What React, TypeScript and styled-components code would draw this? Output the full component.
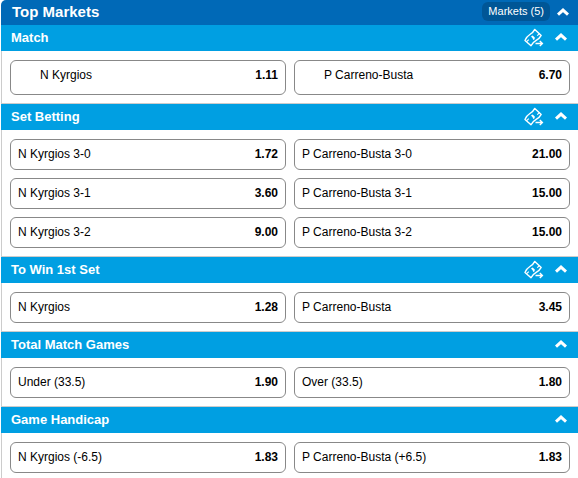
import React, { useState } from "react";
import styled, { createGlobalStyle } from "styled-components";

const GlobalStyle = createGlobalStyle`
  *, *::before, *::after { box-sizing: border-box; }
  body {
    margin: 0;
    background: #fff;
    color: #000;
    font-family: "Liberation Sans", Arial, sans-serif;
    font-size: 12px;
    line-height: 16px;
    overflow-x: hidden;
  }
  button { font: inherit; color: inherit; cursor: pointer; }
  h1, h2 { margin: 0; }
`;

const Panel = styled.main`
  margin-left: 1px;
`;

const PanelHeader = styled.header`
  display: flex;
  align-items: center;
  gap: 7px;
  height: 25px;
  padding: 0 9px 2px 11px;
  background: #0069b7;
  color: #fff;
  border-top-left-radius: 5px;
`;

const PanelTitle = styled.h1`
  flex: 1;
  font-size: 15px;
  line-height: 23px;
`;

const CountPill = styled.button`
  height: 19px;
  padding: 0 6px;
  border: 0;
  border-radius: 6px;
  background: #005696;
  font-size: 11px;
  line-height: 19px;
`;

const Market = styled.section`
  & + & { border-top: 1px solid #ccc; }
`;

const MarketHeader = styled.header`
  display: flex;
  align-items: center;
  gap: 11px;
  height: 26px;
  padding: 0 11px 0 10px;
  background: #009fe2;
  color: #fff;
`;

const MarketTitle = styled.h2`
  flex: 1;
  font-size: 13px;
  line-height: 26px;
`;

const IconButton = styled.button`
  display: flex;
  padding: 0;
  border: 0;
  background: none;
`;

const ToggleButton = styled(IconButton)`
  padding-bottom: 2px;
`;

const Selections = styled.div`
  display: grid;
  grid-template-columns: 1fr 1fr;
  gap: 8px;
  padding: 9px 8px 8px;
  border-left: 1px solid #ccc;
`;

const Selection = styled.button<{ $featured?: boolean }>`
  display: flex;
  align-items: center;
  justify-content: space-between;
  height: ${(p) => (p.$featured ? 35 : 31)}px;
  padding: ${(p) => (p.$featured ? "0 7px 6px 29px" : "0 7px 2px")};
  border: 1px solid #888;
  border-radius: 6px;
  background: #fff;
  text-align: left;
`;

const Odds = styled.strong`
  font-weight: bold;
`;

const Chevron = ({ open }: { open: boolean }) => (
  <svg width="12" height="8" viewBox="0 0 12 8" fill="none" stroke="#fff" strokeWidth="3">
    <path d={open ? "M1 6.7 6 2.1 11 6.7" : "M1 1.3 6 5.9 11 1.3"} />
  </svg>
);

const CashOutIcon = () => (
  <svg width="20" height="20" viewBox="0 0 20 20" fill="none" stroke="#fff" strokeWidth="1.4" strokeLinejoin="round">
    <path d="M1 12.4C3.2 5.6 7.8 7.6 10.8 1.4L17.2 7.4C14.2 13.4 9.8 11.4 7 17.8Z" />
    <path d="M2.6 13.6 4.8 11.6M13.2 7.6 15.6 5.6" strokeWidth="1.2" />
    <path d="M7 8.4 8.6 7.4 10.8 9.4 10.6 11.2 9.2 12 8.6 10.2Z" fill="#fff" stroke="none" />
    <path d="M11.5 15.5H18.2M15.8 13 18.4 15.5 15.8 18" strokeLinejoin="miter" />
  </svg>
);

type Pick = [name: string, odds: string];

interface MarketData {
  title: string;
  cashOut?: boolean;
  featured?: boolean;
  picks: Pick[];
}

const markets: MarketData[] = [
  {
    title: "Match",
    cashOut: true,
    featured: true,
    picks: [["N Kyrgios", "1.11"], ["P Carreno-Busta", "6.70"]],
  },
  {
    title: "Set Betting",
    cashOut: true,
    picks: [
      ["N Kyrgios 3-0", "1.72"], ["P Carreno-Busta 3-0", "21.00"],
      ["N Kyrgios 3-1", "3.60"], ["P Carreno-Busta 3-1", "15.00"],
      ["N Kyrgios 3-2", "9.00"], ["P Carreno-Busta 3-2", "15.00"],
    ],
  },
  {
    title: "To Win 1st Set",
    cashOut: true,
    picks: [["N Kyrgios", "1.28"], ["P Carreno-Busta", "3.45"]],
  },
  {
    title: "Total Match Games",
    picks: [["Under (33.5)", "1.90"], ["Over (33.5)", "1.80"]],
  },
  {
    title: "Game Handicap",
    picks: [["N Kyrgios (-6.5)", "1.83"], ["P Carreno-Busta (+6.5)", "1.83"]],
  },
];

function MarketSection({ title, cashOut, featured, picks }: MarketData) {
  const [open, setOpen] = useState(true);
  return (
    <Market>
      <MarketHeader>
        <MarketTitle>{title}</MarketTitle>
        {cashOut && (
          <IconButton type="button" aria-label={`Cash out ${title}`}>
            <CashOutIcon />
          </IconButton>
        )}
        <ToggleButton
          type="button"
          aria-label={`Toggle ${title}`}
          aria-expanded={open}
          onClick={() => setOpen(!open)}
        >
          <Chevron open={open} />
        </ToggleButton>
      </MarketHeader>
      {open && (
        <Selections>
          {picks.map(([name, odds]) => (
            <Selection key={name} type="button" $featured={featured}>
              <span>{name}</span>
              <Odds>{odds}</Odds>
            </Selection>
          ))}
        </Selections>
      )}
    </Market>
  );
}

export default function App() {
  const [open, setOpen] = useState(true);
  return (
    <>
      <GlobalStyle />
      <Panel>
        <PanelHeader>
          <PanelTitle>Top Markets</PanelTitle>
          <CountPill type="button">Markets ({markets.length})</CountPill>
          <IconButton
            type="button"
            aria-label="Toggle Top Markets"
            aria-expanded={open}
            onClick={() => setOpen(!open)}
          >
            <Chevron open={open} />
          </IconButton>
        </PanelHeader>
        {open && markets.map((market) => <MarketSection key={market.title} {...market} />)}
      </Panel>
    </>
  );
}
